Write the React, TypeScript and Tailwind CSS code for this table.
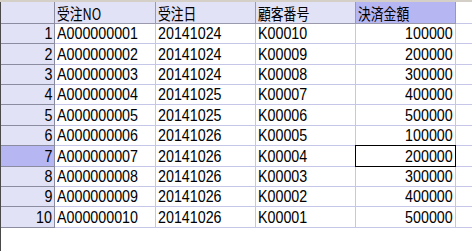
const rows = [
  ["A000000001", "20141024", "K00010", "100000"],
  ["A000000002", "20141024", "K00009", "200000"],
  ["A000000003", "20141024", "K00008", "300000"],
  ["A000000004", "20141025", "K00007", "400000"],
  ["A000000005", "20141025", "K00006", "500000"],
  ["A000000006", "20141026", "K00005", "100000"],
  ["A000000007", "20141026", "K00004", "200000"],
  ["A000000008", "20141026", "K00003", "300000"],
  ["A000000009", "20141026", "K00002", "400000"],
  ["A000000010", "20141026", "K00001", "500000"],
];

// the grid lines fall at ~20.4px steps, so mix 20 and 21
const rowHeights = ["h-[20px]", "h-[21px]", "h-[20px]", "h-[20px]", "h-[21px]", "h-[20px]", "h-[21px]", "h-[20px]", "h-[20px]", "h-[21px]"];

const headers = ["受注NO", "受注日", "顧客番号", "決済金額"];
const colWidths = ["w-[101px]", "w-[100px]", "w-[100px]", "w-[100px]"];

const selectedRow = 6;

function Txt({ children, right }: { children: React.ReactNode; right?: boolean }) {
  return (
    <span className={right ? "inline-block whitespace-nowrap origin-right scale-x-[0.84]" : "inline-block whitespace-nowrap origin-left scale-x-[0.84]"}>
      {children}
    </span>
  );
}

export default function App() {
  return (
    <div className="w-[472px] h-[251px] overflow-hidden bg-white text-[17px] leading-none text-black font-['Liberation_Sans','Noto_Sans_CJK_JP',sans-serif]">
      <div className="h-[2px] bg-[#d4d0c8]" />
      <div className="h-[249px] border-l border-[#4a4a4a]">
        {/* header row */}
        <div className="flex h-[22px]">
          <div className="w-[54px] shrink-0 bg-[#e2e2f6] border-r border-b border-[#8c8ca0]" />
          {headers.map((h, i) => (
            <div
              key={h}
              className={`${colWidths[i]} shrink-0 flex items-center pl-[2px] border-r border-b border-[#9a9aac] ${i === 3 ? "bg-[#b6b6f2]" : "bg-[#e2e2f6]"}`}
            >
              <span className="inline-block whitespace-nowrap origin-left scale-x-[0.8] font-['Noto_Sans_CJK_JP',sans-serif] text-[16px]">{h}</span>
            </div>
          ))}
          <div className="flex-1 border-b border-[#c6c6e8]" />
        </div>

        {rows.map((r, ri) => (
          <div key={ri} className={`flex ${rowHeights[ri]}`}>
            <div
              className={`w-[54px] shrink-0 flex items-center justify-end pr-[2px] border-r border-b border-[#8c8ca0] ${ri === selectedRow ? "bg-[#b6b6f2]" : "bg-[#e2e2f6]"}`}
            >
              <Txt right>{ri + 1}</Txt>
            </div>
            <div className={`${colWidths[0]} shrink-0 flex items-center pl-[2px] border-r border-b border-[#c6c6e8]`}>
              <Txt>{r[0]}</Txt>
            </div>
            <div className={`${colWidths[1]} shrink-0 flex items-center pl-[2px] border-r border-b border-[#c6c6e8]`}>
              <Txt>{r[1]}</Txt>
            </div>
            <div className={`${colWidths[2]} shrink-0 flex items-center pl-[2px] border-r border-b border-[#c6c6e8]`}>
              <Txt>{r[2]}</Txt>
            </div>
            <div className={`${colWidths[3]} relative shrink-0 flex items-center justify-end pr-[2px] border-r border-b border-[#c6c6e8]`}>
              <Txt right>{r[3]}</Txt>
              {ri === selectedRow && <div className="absolute -inset-px border border-black" />}
            </div>
            <div className="flex-1 border-b border-[#c6c6e8]" />
          </div>
        ))}
      </div>
    </div>
  );
}
